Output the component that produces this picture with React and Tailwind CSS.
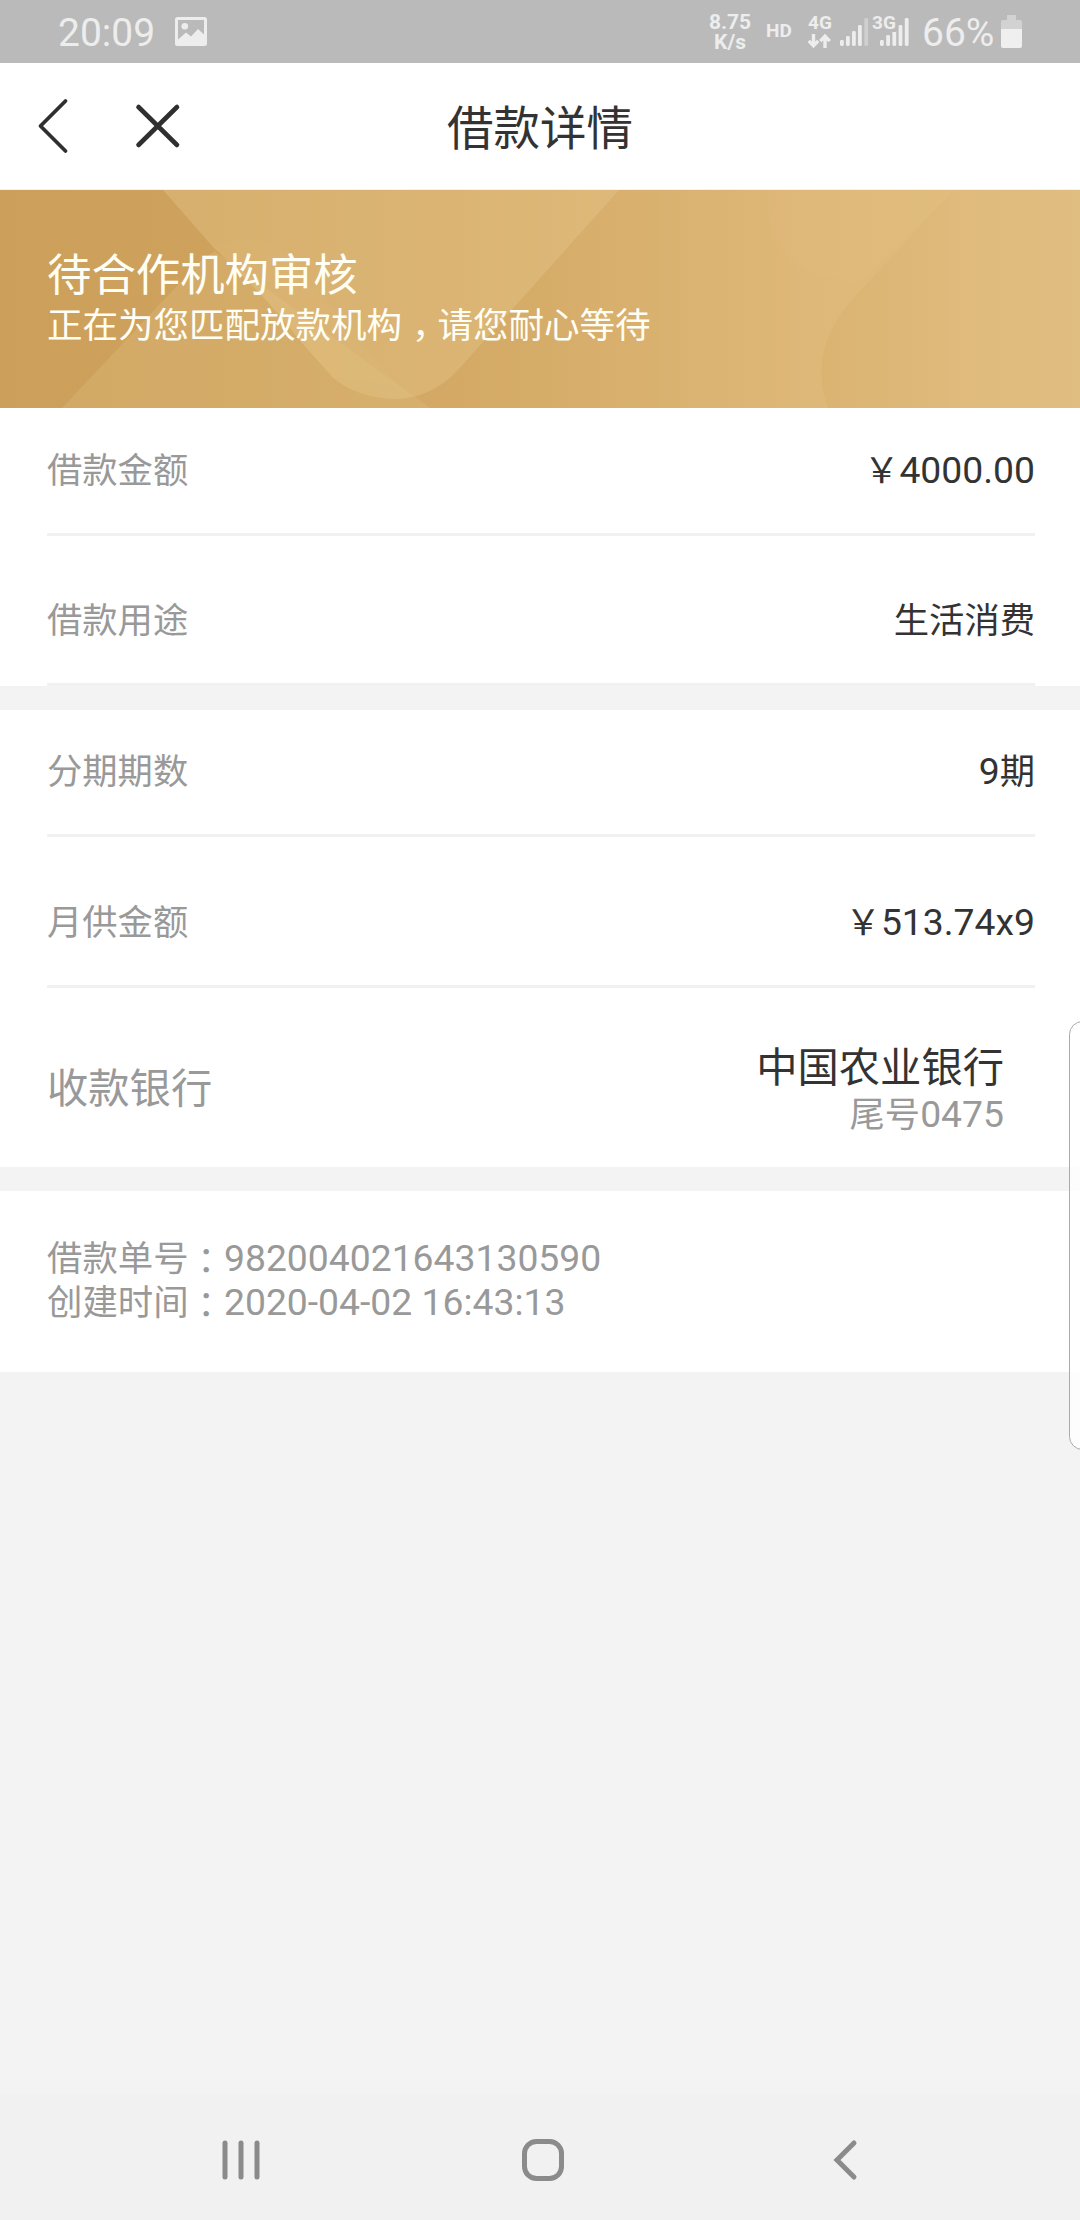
const signalOne = [
  { x: 0, h: 6 },
  { x: 6, h: 10 },
  { x: 12, h: 15 },
  { x: 18, h: 21 },
  { x: 24.3, h: 28, dim: true },
];

const signalTwo = [
  { x: 0, h: 6 },
  { x: 6.2, h: 11 },
  { x: 12.4, h: 16 },
  { x: 18.6, h: 21 },
  { x: 24.8, h: 28 },
];

const SignalBars = ({ bars }) => (
  <svg width="29" height="28" viewBox="0 0 29 28">
    {bars.map((bar) => (
      <rect
        key={bar.x}
        x={bar.x}
        y={28 - bar.h}
        width="3.8"
        height={bar.h}
        rx="1.4"
        fill={bar.dim ? "#cfcfcf" : "#ededed"}
      />
    ))}
  </svg>
);

const StatusBar = () => (
  <div className="flex h-[63px] items-start bg-[#bababa] font-[Roboto,sans-serif] text-[#ededed]">
    <span className="ml-[58px] mt-[10px] w-[117px] text-[39px] leading-[46px]">20:09</span>
    <svg className="mt-[17px]" width="32" height="29" viewBox="0 0 32 29">
      <path
        fillRule="evenodd"
        fill="#ededed"
        d="M2.5 0h27A2.5 2.5 0 0 1 32 2.500v24A2.500 2.500 0 0 1 29.500 29h-27A2.500 2.500 0 0 1 0 26.500v-24A2.500 2.500 0 0 1 2.500 0zM3 3v19.500l8-7 5 4 7-7.500 6 5.500V3z"
      />
      <circle cx="9.800" cy="9.200" r="3.300" fill="#ededed" />
    </svg>
    <div className="ml-[501px] mt-[13px] w-[44px] text-center text-[21px] font-bold leading-[19.5px]">
      <div>8.75</div>
      <div>K/s</div>
    </div>
    <span className="ml-[14px] mt-[20px] w-[42px] text-[19px] font-bold leading-[22px]">HD</span>
    <div className="mt-[12px] w-[32px]">
      <div className="text-[19px] font-bold leading-[22px]">4G</div>
      <svg width="23" height="14" viewBox="0 0 23 14" fill="none" stroke="#ededed" strokeWidth="3.400">
        <path d="M5.500 0v11M0.800 6.800l4.700 5 4.700-5" />
        <path d="M17 14V3M12.300 7.200l4.700-5 4.700 5" />
      </svg>
    </div>
    <div className="mt-[18px] w-[32px]">
      <SignalBars bars={signalOne} />
    </div>
    <div className="relative mt-[18px] ml-[8px] w-[42px]">
      <SignalBars bars={signalTwo} />
      <span className="absolute -top-[4px] -left-[8px] bg-[#bababa] text-[19px] font-bold leading-[18px]">3G</span>
    </div>
    <span className="mt-[10px] w-[79px] text-[39px] leading-[46px]">66%</span>
    <svg className="mt-[15px]" width="21" height="33" viewBox="0 0 21 33">
      <path d="M6 0h9v5h4a2 2 0 0 1 2 2v9H0V7a2 2 0 0 1 2-2h4z" fill="#d2d2d2" />
      <path d="M0 14h21v17a2 2 0 0 1-2 2H2a2 2 0 0 1-2-2z" fill="#efefef" />
    </svg>
  </div>
);

const Header = () => (
  <div className="grid h-[127px] grid-cols-3 items-center border-b border-[#fbf1dc] bg-white">
    <svg className="ml-[36px]" width="150" height="56" viewBox="0 0 150 56" fill="none" stroke="#2f2f2f" strokeLinecap="round">
      <path d="M29.500 3 4.500 28l25 25" strokeWidth="3.800" strokeLinejoin="round" />
      <path d="M102.500 9l38.500 38M141 9l-38.500 38" strokeWidth="4.600" />
    </svg>
    <h1 className="pb-[3px] text-center text-[46.5px] leading-[56px] text-[#333]">借款详情</h1>
  </div>
);

const Banner = () => (
  <div className="relative h-[218px] overflow-hidden">
    <svg className="absolute inset-0" width="1080" height="218" viewBox="0 0 1080 218">
      <defs>
        <linearGradient id="gold" x1="0" x2="1">
          <stop offset="0" stopColor="#cc9f5a" />
          <stop offset="0.2" stopColor="#cea25d" />
          <stop offset="0.5" stopColor="#d6ac69" />
          <stop offset="0.75" stopColor="#deb878" />
          <stop offset="1" stopColor="#e0bd80" />
        </linearGradient>
        <linearGradient id="shade" x1="0" x2="1">
          <stop offset="0" stopColor="#d3a862" stopOpacity="0.3" />
          <stop offset="1" stopColor="#d3a862" stopOpacity="0" />
        </linearGradient>
      </defs>
      <rect width="1080" height="218" fill="url(#gold)" />
      {/* left leg of the wave */}
      <path d="M62 218 190 82Q202 68 215 61L333 188L360 218z" fill="#e8c98c" fillOpacity="0.24" />
      <path d="M333 188 215 61 430 218H360z" fill="#e8c98c" fillOpacity="0.24" />
      {/* right leg */}
      <path
        d="M163 0H619L458 180Q430 209 395 209Q358 208 333 188L300 151Q265 105 213 57z"
        fill="#e8c98c"
        fillOpacity="0.38"
      />
      <path d="M213 57Q262 38 290 68Q340 130 400 196L333 188L300 151Q265 105 213 57z" fill="#e8c98c" fillOpacity="0.06" />
      <path d="M768 0Q766 40 780 58L800 78 855 95 935 20 955 0z" fill="#e8c98c" fillOpacity="0.1" />
      <path d="M955 0 935 20 860 101C826 135 812 175 828 218H980V0z" fill="url(#shade)" />
    </svg>
    <div className="relative pl-[47px] pt-[56px] text-[#fffef5]">
      <div className="text-[44.4px] leading-[52px]">待合作机构审核</div>
      <div className="text-[35.5px] leading-[50px]">
        正在为您匹配放款机构
        <span className="relative left-[10px]">{"\uFF0C"}</span>
        请您耐心等待
      </div>
    </div>
  </div>
);

const Row = ({ label, children, className = "h-[128px]" }) => (
  <div className={`ml-[47px] mr-[45px] flex items-center justify-between border-b-[3px] border-[#f1f1f1] pb-[5px] text-[35.3px] ${className}`}>
    <span className="text-[#999]">{label}</span>
    <span className="text-[#333]">{children}</span>
  </div>
);

const Num = ({ children }) => (
  <span className="font-[Roboto,sans-serif] text-[37.3px] leading-none">{children}</span>
);

const Yen = () => <span>{"\uFFE5"}</span>;

const Colon = () => <span className="relative top-[3px] font-['Noto_Sans_CJK_TC',sans-serif]">{"\uFF1A"}</span>;

const NavBar = () => (
  <div className="flex h-[126px] items-center bg-[#f1f1f1] pt-[5px]">
    <svg className="ml-[221px]" width="40" height="42" viewBox="0 0 40 42" stroke="#8b8b8b" strokeWidth="5" strokeLinecap="round">
      <path d="M4 4v34M20 4v34M36 4v34" />
    </svg>
    <svg className="ml-[261px]" width="42" height="42" viewBox="0 0 42 42" fill="none" stroke="#8b8b8b" strokeWidth="5">
      <rect x="2.500" y="2.500" width="37" height="37" rx="12" />
    </svg>
    <svg className="ml-[269px]" width="26" height="42" viewBox="0 0 26 42" fill="none" stroke="#8b8b8b" strokeWidth="5" strokeLinecap="round">
      <path d="M21 4 4 21l17 17" />
    </svg>
  </div>
);

const App = () => {
  return (
    <div className="relative flex h-[2220px] w-[1080px] flex-col overflow-hidden bg-[#f3f3f3] font-['Noto_Sans_CJK_SC',sans-serif]">
      <StatusBar />
      <Header />
      <Banner />

      <div className="h-[278px] bg-white">
        <Row label="借款金额"><Yen /><Num>4000.00</Num></Row>
        <Row label="借款用途" className="mt-[22px] h-[128px]">生活消费</Row>
      </div>

      <div className="mt-6 h-[457px] bg-white">
        <Row label="分期期数" className="h-[127px]"><Num>9</Num>期</Row>
        <Row label="月供金额" className="mt-[23px] h-[128px]"><Yen /><Num>513.74x9</Num></Row>
        <div className="flex h-[179px] items-center justify-between pt-[17px] pl-[47px] pr-[76px]">
          <span className="text-[41.3px] text-[#999]">收款银行</span>
          <div className="pt-[2px] text-right">
            <div className="text-[41.3px] leading-[48px] text-[#333]">中国农业银行</div>
            <div className="text-[35.3px] leading-[47px] text-[#999]">尾号<Num>0475</Num></div>
          </div>
        </div>
      </div>

      <div className="mt-6 h-[181px] bg-white pl-[47px] pt-[43px] text-[35.4px] leading-[44px] text-[#999]">
        <div>借款单号<Colon /><Num>982004021643130590</Num></div>
        <div>创建时间<Colon /><Num>2020-04-02 16:43:13</Num></div>
      </div>

      {/* Edge panel handle */}
      <div className="absolute -right-[16px] top-[1021px] h-[429px] w-[27px] rounded-[14px] border border-[#aaa] bg-white/80" />

      <div className="mt-auto">
        <NavBar />
      </div>
    </div>
  );
};

export default App;
